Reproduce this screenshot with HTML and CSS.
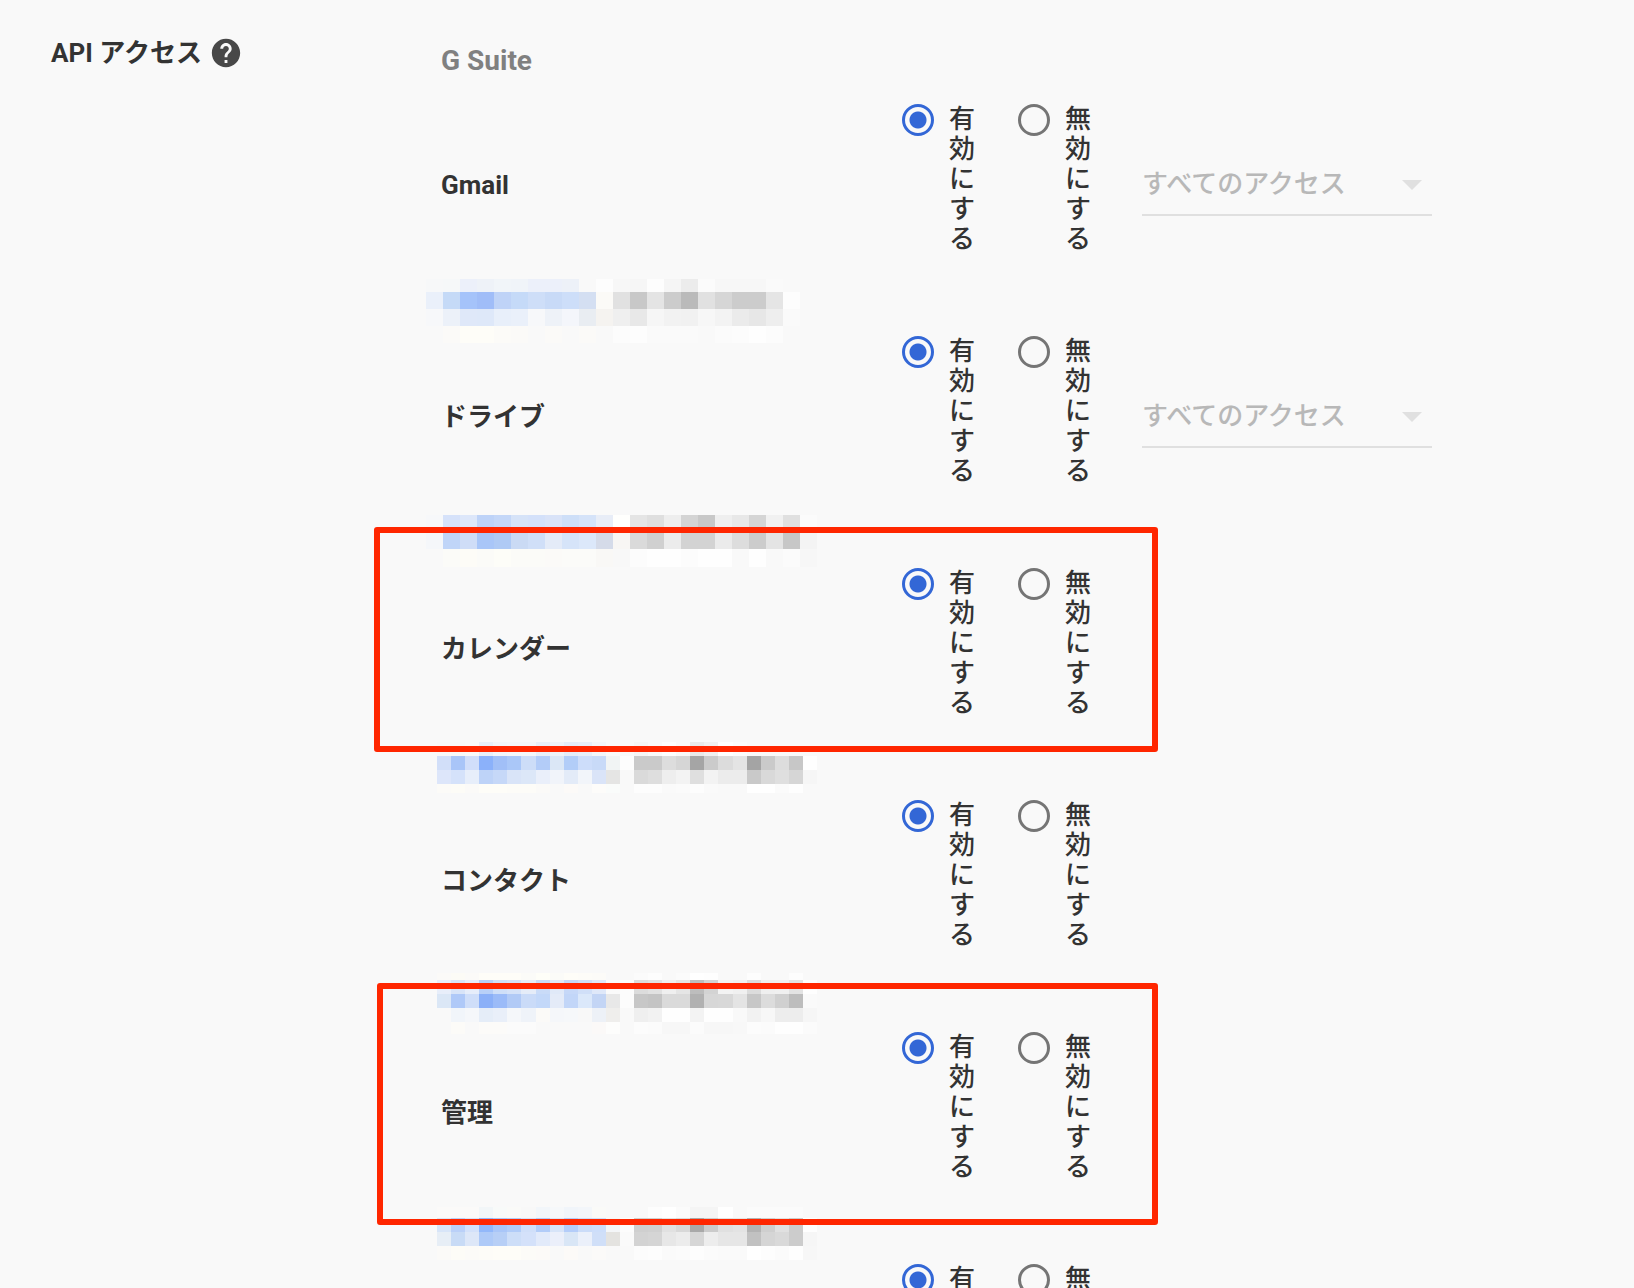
FILE: index.html
```html
<!DOCTYPE html>
<html lang="ja">
<head>
<meta charset="utf-8">
<meta name="viewport" content="width=device-width, initial-scale=1">
<title>API アクセス</title>
<link rel="stylesheet" href="styles.css">
</head>
<body>
<main class="page">
  <header class="section-label">
    <h1 class="section-title">API アクセス</h1>
    <button class="help" type="button" aria-label="ヘルプ">
      <svg class="help-icon" viewBox="0 0 24 24" aria-hidden="true"><path d="M12 2C6.48 2 2 6.48 2 12s4.480 10 10 10 10-4.480 10-10S17.520 2 12 2zm1 17h-2v-2h2v2zm2.070-7.750l-.9.920C13.450 12.900 13 13.500 13 15h-2v-.5c0-1.100.450-2.100 1.170-2.830l1.240-1.260c.370-.360.590-.860.590-1.410 0-1.100-.9-2-2-2s-2 .9-2 2H8c0-2.210 1.790-4 4-4s4 1.790 4 4c0 .880-.360 1.680-.930 2.250z"/></svg>
    </button>
  </header>

  <section class="suite">
    <h2 class="suite-title">G Suite</h2>
    <div class="services">
      <div class="service">
        <h3 class="service-name">Gmail</h3>
        <div class="options" role="radiogroup" aria-label="Gmail">
          <label class="option"><input class="radio" type="radio" name="gmail" checked><span class="option-text">有効にする</span></label>
          <label class="option"><input class="radio" type="radio" name="gmail"><span class="option-text">無効にする</span></label>
        </div>
        <div class="scope"><select class="scope-select" aria-label="Gmail のアクセス範囲" disabled><option>すべてのアクセス</option></select></div>
      </div>
      <div class="service">
        <h3 class="service-name">ドライブ</h3>
        <div class="options" role="radiogroup" aria-label="ドライブ">
          <label class="option"><input class="radio" type="radio" name="drive" checked><span class="option-text">有効にする</span></label>
          <label class="option"><input class="radio" type="radio" name="drive"><span class="option-text">無効にする</span></label>
        </div>
        <div class="scope"><select class="scope-select" aria-label="ドライブのアクセス範囲" disabled><option>すべてのアクセス</option></select></div>
      </div>
      <div class="service">
        <h3 class="service-name">カレンダー</h3>
        <div class="options" role="radiogroup" aria-label="カレンダー">
          <label class="option"><input class="radio" type="radio" name="calendar" checked><span class="option-text">有効にする</span></label>
          <label class="option"><input class="radio" type="radio" name="calendar"><span class="option-text">無効にする</span></label>
        </div>
      </div>
      <div class="service">
        <h3 class="service-name">コンタクト</h3>
        <div class="options" role="radiogroup" aria-label="コンタクト">
          <label class="option"><input class="radio" type="radio" name="contacts" checked><span class="option-text">有効にする</span></label>
          <label class="option"><input class="radio" type="radio" name="contacts"><span class="option-text">無効にする</span></label>
        </div>
      </div>
      <div class="service">
        <h3 class="service-name">管理</h3>
        <div class="options" role="radiogroup" aria-label="管理">
          <label class="option"><input class="radio" type="radio" name="admin" checked><span class="option-text">有効にする</span></label>
          <label class="option"><input class="radio" type="radio" name="admin"><span class="option-text">無効にする</span></label>
        </div>
      </div>
      <div class="service">
        <h3 class="service-name"></h3>
        <div class="options" role="radiogroup" aria-label="その他">
          <label class="option"><input class="radio" type="radio" name="other" checked><span class="option-text">有効にする</span></label>
          <label class="option"><input class="radio" type="radio" name="other"><span class="option-text">無効にする</span></label>
        </div>
      </div>
    </div>
  </section>

  <svg class="mosaic mosaic-gmail" aria-hidden="true"></svg>
  <svg class="mosaic mosaic-drive" aria-hidden="true"></svg>
  <svg class="mosaic mosaic-calendar" aria-hidden="true"></svg>
  <svg class="mosaic mosaic-contacts" aria-hidden="true"></svg>
  <svg class="mosaic mosaic-admin" aria-hidden="true"></svg>
  <div class="marker marker-calendar"></div>
  <div class="marker marker-admin"></div>
</main>
<script src="mosaic.js"></script>
</body>
</html>
```
FILE: styles.css
```css
* {
  box-sizing: border-box;
}

body {
  margin: 0;
  height: 100vh;
  overflow: hidden;
  background: #f9f9f9;
  color: #333;
  font-family: Roboto, "Noto Sans CJK JP", sans-serif;
  font-size: 26px;
  font-weight: 500;
  line-height: 30px;
}

h1,
h2,
h3 {
  margin: 0;
  font-size: 26px;
  font-weight: 700;
}

.page {
  position: relative;
  display: flex;
  align-items: flex-start;
  padding: 36px 51px 0;
}

.section-label {
  flex: 0 0 390px;
  display: flex;
  align-items: center;
  gap: 7px;
}

.help {
  display: flex;
  padding: 0;
  border: 0;
  background: none;
}

.help-icon {
  width: 34px;
  height: 34px;
  fill: #484848;
}

.suite {
  flex: 1;
  padding-top: 7px;
}

.suite .suite-title {
  color: #808080;
  font-size: 28px;
  line-height: 36px;
}

.services {
  display: flex;
  flex-direction: column;
  gap: 20px;
}

.service {
  display: flex;
  align-items: center;
  min-height: 212px;
}

.service-name {
  flex: 0 0 461px;
}

.options {
  display: flex;
  gap: 43px;
  padding-bottom: 12px;
}

.option {
  display: flex;
  align-items: flex-start;
  gap: 15px;
}

.option-text {
  width: 26px;
  word-break: break-all;
}

.radio {
  appearance: none;
  flex: none;
  width: 32px;
  height: 32px;
  margin: 0;
  border: 3px solid #757575;
  border-radius: 50%;
}

.radio:checked {
  border-color: #3367d6;
  background: radial-gradient(circle, #3367d6 8px, transparent 9px);
}

.scope {
  position: relative;
  flex: 0 1 290px;
  margin-left: 51px;
}

.scope::after {
  content: "";
  position: absolute;
  top: 26px;
  right: 10px;
  border: 10px solid transparent;
  border-top-color: #e0e0e0;
  border-bottom: 0;
  pointer-events: none;
}

.scope-select {
  display: block;
  appearance: none;
  width: 100%;
  height: 62px;
  padding: 0;
  border: 0;
  border-bottom: 2px solid #e0e0e0;
  border-radius: 0;
  background: none;
  color: #b8b8b8;
  font: inherit;
  opacity: 1;
}

/* Redacted details, laid over the list */
.mosaic {
  position: absolute;
}

.mosaic-gmail { top: 279px; left: 426px; width: 374px; height: 64px; }
.mosaic-drive { top: 515px; left: 426px; width: 391px; height: 52px; }
.mosaic-calendar { top: 742px; left: 437px; width: 380px; height: 51px; }
.mosaic-contacts { top: 973px; left: 437px; width: 380px; height: 61px; }
.mosaic-admin { top: 1207px; left: 437px; width: 380px; height: 53px; }

/* Red highlight frames */
.marker {
  position: absolute;
  border: 6px solid #ff2600;
  border-radius: 3px;
  pointer-events: none;
}

.marker-calendar { top: 527px; left: 374px; width: 784px; height: 225px; }
.marker-admin { top: 983px; left: 377px; width: 781px; height: 242px; }
```
FILE: mosaic.js
```js
// Each row is [height, colours]; "-" leaves a cell clear, two digits are a grey.
const mosaics = {
  gmail: [
    [13, "f7f8f9 f6f8f9 ecf0fa eef2f8 f1f5f9 f0f4f9 ecf0fa ecf0fa edf1f8 - fd f7 f6 fd f5 ec fb f7 f7 f7 fa -"],
    [17, "eaf0fa c5daf7 a5c3fa a0bdf8 bfd3f7 c5daf8 cedef8 c8daf7 cddef9 d4dff2 fbfaf7 e1 c8 e4 cc ba e1 d6 cc cc e5 fd"],
    [17, "f7f8fa ecf1f9 dfe8f9 dee8f9 e8effa eaf0fa f7f8fa eef2f8 f4f6fb e9edf2 f5f3f0 ef e8 f6 f2 f1 f7 f3 eb e7 ee fa"],
    [17, "- fbfaf8 fefdf8 fefdf8 fcfbf8 fbfaf8 - fbfaf8 - fbfaf8 - fc fd fa fa fa - fb fc fe fc -"]
  ],
  drive: [
    [17, "f7f8fa d6e2fa dde7fa bed3f8 c4d7f8 d6e3f8 d4e1fa d9e3f8 cedff8 d5e3f9 e8edf7 fffffd e5 df ee d4 c8 ef e8 d5 f1 e0 fb"],
    [17, "f5f7fa c0d5f8 cfddf7 a9c6f8 afcaf5 cadaf4 d0dff8 e4ebf8 d6e4f9 dce8fa d5dbe9 f8f6f4 da d0 ec d3 d3 eb dd cc e4 c7 f4"],
    [18, "- fbfbf8 fdfcf7 fbfbf8 fdfdf8 fbfbf8 fbfbf8 fbfaf8 fbfbf9 fbfbf9 f9f8f6 f8 fc fe fe fc fe fe - fe - fb f7"]
  ],
  calendar: [
    [14, "f8 f8 - e8eff8 f2f5f9 f4f6f9 f4f6f9 e8eff8 eef2f8 e4ecf8 e7eef8 f3f5f9 - - f5 - fd - e9 f0 fe fb - - - - -"],
    [14, "d2dff9 a9c5f8 d1defa 8bb1fa a1bff7 aac7f8 cdddf8 b3ccf8 dbe7f6 b2cdf8 cdddfa c8daf8 f1f4f4 fd ca ca dd d6 a5 cb dc e4 a4 ca dd c7 fe"],
    [14, "dde6fa d5e2fa e7eefa bed3f8 c6d8f8 d9e4f8 dce7f8 eaeffa f1f4fa e3ebf8 f2f5fa dae4f8 e5e5e4 - da de ee f3 df f3 ec ec c9 d9 df d6 f6"],
    [9, "fcfbf8 fdfcf7 fbfaf8 fefdf8 fefdf8 fdfcf8 fdfcf8 fbfaf8 - fcfaf8 - fdfcfa fafcfb - fd fd fa fb fd fa - - ff ff fb fe -"]
  ],
  contacts: [
    [7, "fbfaf8 fcfbf6 fbfaf8 fefdf8 fefdf8 fefdf8 fbfbf8 fefef8 fbfbf8 fefdf8 fdfcf8 fcfbf8 - - fb fd - fb ff fe - - fd - - fd -"],
    [14, "e8eefa d8e4f8 e6edfa b8d0f8 cfdff8 d5e2f8 e5ecf8 c9dbf8 e0e9f8 c6d8f8 d0dff8 dfe8f9 fa fc dc e1 ef e5 bd d3 f3 f0 dc ef f0 e3 fe"],
    [14, "dbe7f6 afc9f8 cfdef9 8bb0f8 9bbbf8 b1caf6 cadbf8 c3d8f9 e4ebf8 c2d6f8 dbe8fa c3d5f5 e8 fc c7 c4 da da b1 d7 d8 e4 c7 dc d0 bd fa"],
    [14, "- f1f5fa f5f7fa e5edf8 e9eff9 f5f7fa eff3f9 fbfaf8 f5f7fa f6f8fa f8 edf1f7 efeeec - ef f2 fe fe f3 fe fe - f2 f7 ed ed f6"],
    [12, "- fcfbf8 - fcfbf9 fcfbf9 fb fb - - - - fbf9f8 fdfdfc - fc fb f7 f7 fb f7 f7 f8 fc fb fe fe fb"]
  ],
  admin: [
    [11, "fbfaf9 fbfaf9 fbfaf9 f2f6f8 f8faf9 fafaf8 f8 f2f6fa f6f8fa f1f5fa f3f6fa fafaf8 - - - fd ff fb f5 f5 ff - fb fb fb fb -"],
    [14, "d8e5f8 bad0f8 d3e1fa 92b8fa a9c6f8 b1ccf8 d0dff9 b2ccf8 d7e4f8 b4cdf9 cbdcf8 cddefa f4f6f8 fc cf d0 e1 d8 a9 cb e0 e3 b3 cf e0 cc fe"],
    [14, "e7eef6 c8dbf6 dde7f8 aecaf8 b7cff6 cddef8 d4e1fa e2eafa ebeffa d9e6f6 ebf0fa d0dff8 e4e3e0 fa d3 d5 e7 ec d6 ed e6 e6 c1 d5 d9 cc f6"],
    [14, "fbfaf8 fdfcf7 fcfbf8 fdfcf8 fefdf8 fefdf8 fcfbf8 fcfaf8 - fcfaf8 - fbfaf9 - - fc fd fa fb fd fb fa fa ff fd fb fe f7"]
  ]
};

for (const [name, rows] of Object.entries(mosaics)) {
  const svg = document.querySelector(".mosaic-" + name);
  const columns = rows[0][1].split(" ").length;
  let y = 0;
  for (const [height, colours] of rows) {
    colours.split(" ").forEach((colour, x) => {
      if (colour === "-") return;
      const cell = document.createElementNS("http://www.w3.org/2000/svg", "rect");
      const fill = colour.length === 2 ? colour.repeat(3) : colour;
      cell.setAttribute("x", x);
      cell.setAttribute("y", y);
      cell.setAttribute("width", 1);
      cell.setAttribute("height", height);
      cell.setAttribute("fill", "#" + fill);
      svg.append(cell);
    });
    y += height;
  }
  svg.setAttribute("viewBox", `0 0 ${columns} ${y}`);
  svg.setAttribute("preserveAspectRatio", "none");
  svg.setAttribute("shape-rendering", "crispEdges");
}
```
